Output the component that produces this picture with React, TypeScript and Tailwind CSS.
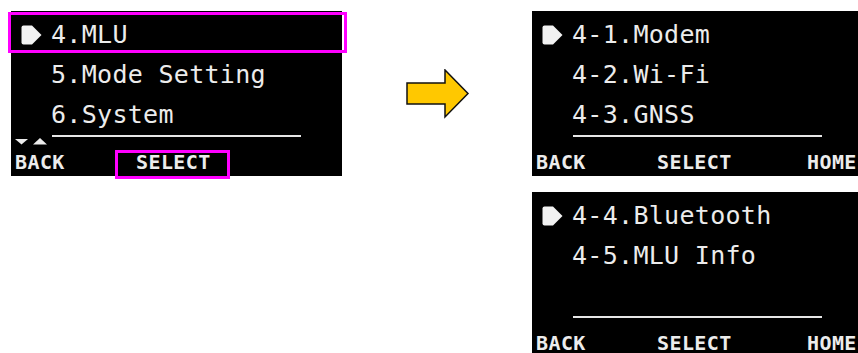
const mono = { fontFamily: '"DejaVu Sans Mono", "Liberation Mono", monospace' }

function Pointer() {
    return (
        <svg width="23" height="22" viewBox="0 0 23 22" className="shrink-0 -ml-[1px]">
            <path d="M1.5 3.5 Q1.5 1.5 3.5 1.5 H12 L21.5 11 L12 20.5 H3.5 Q1.5 20.5 1.5 18.5 Z" fill="#f2f2f2" />
        </svg>
    )
}

function Screen({ items, scroll, home, short, children }: { items: string[]; scroll?: boolean; home?: boolean; short?: boolean; children?: React.ReactNode }) {
    const rows = [...items, '', '', ''].slice(0, 3)
    return (
        <div className={`relative w-[331px] bg-black text-[#ececec] shrink-0 ${short ? 'h-[161px]' : 'h-[165px]'}`} style={mono}>
            <div className="pt-[4px]">
                {rows.map((t, i) => (
                    <div key={i} className="h-[40px] flex items-center pl-[10px]">
                        <div className="w-[30px] shrink-0 flex items-center">{i === 0 && t && <Pointer />}</div>
                        <span className="text-[25px] leading-[40px] tracking-[0.3px] whitespace-pre">{t}</span>
                    </div>
                ))}
            </div>
            <div className="ml-[41px] w-[249px] h-[2px] bg-[#e6e6e6]" />
            <div className="h-[8px] pl-[4px] flex items-end gap-[5px]">
                {scroll && (
                    <svg width="33" height="8" viewBox="0 0 33 8">
                        <path d="M0 2 H13 L6.5 7.5 Z" fill="#ececec" />
                        <path d="M18 7.5 H32 L25 1 Z" fill="#ececec" />
                    </svg>
                )}
            </div>
            <div className="mt-[8px] flex text-[20px] leading-[18px] font-bold tracking-[0.4px]">
                <span className="ml-[4px] w-[121px]">BACK</span>
                <span className="w-[150px]">SELECT</span>
                {home && <span>HOME</span>}
            </div>
            {children}
        </div>
    )
}

export default function App() {
    return (
        <div className="w-[858px] h-[353px] bg-white overflow-hidden flex items-start">
            <div className="ml-[11px] mt-[11px]">
                <Screen items={['4.MLU', '5.Mode Setting', '6.System']} scroll>
                    <div className="absolute left-[-3px] top-[1px] w-[339px] h-[41px] border-[3px] border-[#f0f]" />
                    <div className="absolute left-[104px] top-[139px] w-[115px] h-[29px] border-[3px] border-[#f0f]" />
                </Screen>
            </div>

            <svg width="64" height="50" viewBox="0 0 64 50" className="ml-[64px] mt-[69px] shrink-0">
                <path d="M1 14 H39 V1 L62 24.5 L39 48 V35 H1 Z" fill="#ffc800" stroke="#111" strokeWidth="1.5" strokeLinejoin="miter" />
            </svg>

            <div className="ml-[62px] mt-[11px] flex flex-col gap-[16px]">
                <Screen items={['4-1.Modem', '4-2.Wi-Fi', '4-3.GNSS']} home />
                <Screen items={['4-4.Bluetooth', '4-5.MLU Info']} home short />
            </div>
        </div>
    )
}
